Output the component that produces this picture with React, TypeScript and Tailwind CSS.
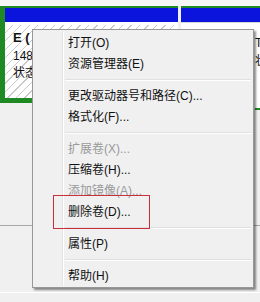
import React from 'react';

type Item = { label: string; disabled?: boolean } | 'sep';

const items: Item[] = [
  { label: '打开(O)' },
  { label: '资源管理器(E)' },
  'sep',
  { label: '更改驱动器号和路径(C)...' },
  { label: '格式化(F)...' },
  'sep',
  { label: '扩展卷(X)...', disabled: true },
  { label: '压缩卷(H)...' },
  { label: '添加镜像(A)...', disabled: true },
  { label: '删除卷(D)...' },
  'sep',
  { label: '属性(P)' },
  'sep',
  { label: '帮助(H)' },
];

export default function App() {
  return (
    <div className="relative w-[260px] h-[302px] overflow-hidden bg-[#f0f0f0] text-[12px] leading-none text-[#111] font-['Liberation_Sans','Noto_Sans_CJK_SC',sans-serif]">
      {/* disk volumes strip */}
      <div className="h-[6px] bg-[#f7f7f7]" />
      <div className="flex gap-[3px]">
        <div className="w-[178px] shrink-0 h-[97px] border-[5px] border-t-[2px] border-r-0 border-[#1f8a24] bg-white flex flex-col">
          <div className="h-[14px] bg-[#0a14dc]" />
          <div className="flex-1 border-t-[3px] border-white pl-[8px] pt-[6px] flex flex-col gap-[5px] bg-[repeating-linear-gradient(135deg,#ffffff_0px,#ffffff_5px,#c9c9c9_5px,#c9c9c9_6px)]">
            <span className="font-bold text-[13px] h-[14px]">E (</span>
            <span className="h-[12px]">148</span>
            <span className="h-[12px]">状态</span>
          </div>
        </div>
        <div className="flex-1 min-w-0 overflow-hidden h-[104px] flex flex-col">
          <div className="h-[2px] bg-[#1f8a24]" />
          <div className="h-[14px] bg-[#0a14dc]" />
          <div className="flex-1 bg-white border-t border-[#d8d8d8] pl-[74px] pt-[14px] flex flex-col gap-[6px]">
            <span>T</span>
            <span>状</span>
          </div>
          <div className="h-[2px] bg-[#1f8a24] ml-[74px]" />
        </div>
      </div>
      <div className="mt-[115px] h-px bg-[#a8a8a8]" />
      <div className="mt-[66px] h-px bg-white" />

      {/* context menu */}
      <div className="absolute left-[32px] top-[29px] w-[222px] border border-[#979797] bg-[#f0f0f0] p-[2px] pb-[1px] shadow-[2px_2px_2px_rgba(0,0,0,0.45)]">
        <div className="relative flex flex-col">
          <div className="absolute left-[27px] top-0 bottom-0 w-px bg-[#e2e3e3]" />
          <div className="absolute left-[28px] top-0 bottom-0 w-px bg-white" />
          {items.map((it, i) =>
            it === 'sep' ? (
              <div key={i} className="h-[11px] flex flex-col justify-center pl-[30px]">
                <div className="h-px bg-[#e0e0e0]" />
                <div className="h-px bg-white" />
              </div>
            ) : (
              <div
                key={i}
                className={`h-[21px] flex items-center pl-[33px] ${it.disabled ? 'text-[#9a9a9a]' : 'text-[#111]'}`}
              >
                {it.label}
              </div>
            )
          )}
        </div>
      </div>

      {/* highlight box */}
      <div className="absolute left-[53px] top-[195px] w-[97px] h-[34px] border border-[#c8303c]" />
    </div>
  );
}
